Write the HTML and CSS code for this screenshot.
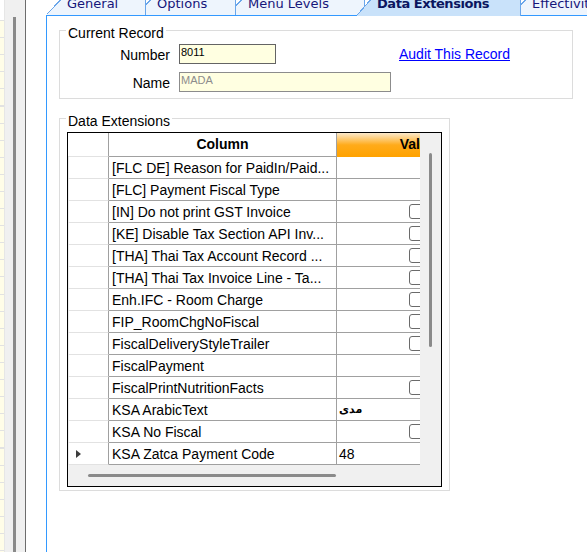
FILE: index.html
```html
<!DOCTYPE html>
<html lang="en">

<head>
  <meta charset="UTF-8">
  <meta name="viewport" content="width=device-width, initial-scale=1.0">
  <title>Tender Media - Data Extensions</title>
  <link rel="stylesheet" href="styles.css">
</head>

<body>
  <div class="app">
    <div class="side">
      <div class="side-cells"><div class="cells"></div></div>
      <div class="side-scroll"><div class="side-thumb"></div></div>
    </div>

    <div class="main">
      <div class="tabs">
        <div class="tab tab-general">General</div>
        <div class="tab tab-options">Options</div>
        <div class="tab tab-menu">Menu Levels</div>
        <div class="tab tab-ext active">Data Extensions</div>
        <div class="tab tab-eff">Effectivity</div>
      </div>

      <div class="panel">
        <div class="group record">
          <div class="group-title">Current Record</div>
          <div class="field">
            <label class="field-label">Number</label>
            <div class="input number">8011</div>
            <a href="#" class="audit">Audit This Record</a>
          </div>
          <div class="field">
            <label class="field-label">Name</label>
            <div class="input name">MADA</div>
          </div>
        </div>

        <div class="group ext">
          <div class="group-title">Data Extensions</div>
          <div class="grid">
            <div class="grid-left">
              <div class="grid-view">
                <div class="head">
                  <div class="rh"></div>
                  <div class="col">Column</div>
                  <div class="val">Value</div>
                </div>
                <div id="rows"></div>
              </div>
              <div class="hscroll"><div class="hthumb"></div></div>
            </div>
            <div class="vscroll"><div class="vthumb"></div></div>
          </div>
        </div>
      </div>
    </div>
  </div>

  <script>
    // value: "check" draws a checkbox, anything else is printed as text
    var extensions = [
      { name: "[FLC DE] Reason for PaidIn/Paid...", value: "" },
      { name: "[FLC] Payment Fiscal Type", value: "" },
      { name: "[IN] Do not print GST Invoice", value: "check" },
      { name: "[KE] Disable Tax Section API Inv...", value: "check" },
      { name: "[THA] Thai Tax Account Record ...", value: "check" },
      { name: "[THA] Thai Tax Invoice Line - Ta...", value: "check" },
      { name: "Enh.IFC - Room Charge", value: "check" },
      { name: "FIP_RoomChgNoFiscal", value: "check" },
      { name: "FiscalDeliveryStyleTrailer", value: "check" },
      { name: "FiscalPayment", value: "" },
      { name: "FiscalPrintNutritionFacts", value: "check" },
      { name: "KSA ArabicText", value: "مدى", arabic: true },
      { name: "KSA No Fiscal", value: "check" },
      { name: "KSA Zatca Payment Code", value: "48", current: true }
    ];

    function render() {
      var rows = document.getElementById("rows");
      extensions.forEach(function (ext) {
        var row = document.createElement("div");
        row.className = "row";

        var rh = document.createElement("div");
        rh.className = "rh";
        if (ext.current) {
          var mark = document.createElement("span");
          mark.className = "current";
          rh.appendChild(mark);
        }

        var col = document.createElement("div");
        col.className = "col";
        col.textContent = ext.name;

        var val = document.createElement("div");
        val.className = "val";
        if (ext.value === "check") {
          var box = document.createElement("span");
          box.className = "check";
          val.appendChild(box);
        } else {
          val.textContent = ext.value;
          if (ext.arabic) val.classList.add("arabic");
        }

        row.appendChild(rh);
        row.appendChild(col);
        row.appendChild(val);
        rows.appendChild(row);
      });
    }

    render();
  </script>
</body>

</html>
```

FILE: styles.css
```css
* {
  box-sizing: border-box;
}

body {
  margin: 0;
  font-family: "Liberation Sans", Arial, sans-serif;
  font-size: 14px;
  color: #000;
  background: #fff;
}

.app {
  display: flex;
  height: 552px;
  overflow: hidden;
}

/* grid + scrollbar of the list on the left */
.side {
  flex: none;
  display: flex;
  width: 26px;
  border-right: 1px solid #6d6d6d;
}
.side-cells {
  display: flex;
  width: 5px;
  padding-top: 20px;
  border-right: 1px solid #e6e6e6;
}
.side-cells .cells {
  flex: 1;
  background: repeating-linear-gradient(#e2e2e2 0 1px, #fffde8 1px 17.1px);
}
.side-scroll {
  display: flex;
  width: 20px;
  padding: 17px 0 0 8px;
  background: #f0f0f0;
}
.side-thumb {
  width: 3px;
  background: #8a8a8a;
}

.main {
  flex: 1;
  min-width: 0;
  display: flex;
  flex-direction: column;
  padding-left: 20px;
  overflow: hidden;
}

/* tab strip */
.tabs {
  flex: none;
  display: flex;
  align-items: flex-start;
  height: 15px;
}
.tab {
  --bg: #eef5fd;
  flex: none;
  height: 15px;
  padding-left: 20px;
  border-right: 1px solid #6aa6ea;
  font-family: "DejaVu Sans", sans-serif;
  font-size: 13px;
  line-height: 7px;
  color: #16167a;
  white-space: nowrap;
  background:
    linear-gradient(to bottom right, transparent calc(50% - 1px), #6aa6ea calc(50% - 1px), #6aa6ea 50%, var(--bg) 50%) 0 0 / 14px 15px no-repeat,
    linear-gradient(var(--bg), var(--bg)) 14px 0 / 100% 100% no-repeat;
}
.tab-general {
  width: 99px;
  margin-left: 1px;
  z-index: 5;
}
.tab-options {
  width: 99px;
  margin-left: -9px;
  z-index: 4;
}
.tab-menu {
  width: 137px;
  margin-left: -8px;
  z-index: 3;
}
.tab-ext {
  width: 164px;
  margin-left: -8px;
}
.tab-eff {
  width: 100px;
  margin-left: -9px;
  z-index: 1;
}
.tab.active {
  --bg: #c9e2fa;
  height: 16px;
  z-index: 10;
  font-weight: bold;
  letter-spacing: -0.45px;
  color: #0b1660;
  background:
    linear-gradient(to bottom right, transparent calc(50% - 1px), #6aa6ea calc(50% - 1px), #6aa6ea 50%, var(--bg) 50%) 0 0 / 14px 16px no-repeat,
    linear-gradient(var(--bg), var(--bg)) 14px 0 / 100% 100% no-repeat;
}

.panel {
  flex: 1;
  border-left: 1px solid #3399ff;
  border-top: 1px solid #3399ff;
  padding: 14px 0 0 12px;
}

/* group boxes */
.group {
  border: 1px solid #dcdcdc;
}
.group-title {
  width: max-content;
  margin: -6px 0 0 6px;
  padding: 0 2px;
  line-height: 16px;
  background: #fff;
}

.record {
  width: 514px;
  height: 69px;
}
.field {
  display: flex;
  align-items: flex-start;
  height: 20px;
  margin-top: 3px;
}
.field + .field {
  margin-top: 8px;
}
.field-label {
  width: 110px;
  height: 20px;
  margin-right: 9px;
  padding-top: 2px;
  line-height: 18px;
  text-align: right;
}
.input {
  height: 20px;
  padding: 1px 1px 0;
  font-size: 11px;
  line-height: 13px;
  background: #ffffe1;
  border: 1px solid #646464;
}
.input.number {
  width: 97px;
}
.input.name {
  width: 212px;
  color: #8d8d8d;
  border-color: #8c8c8c;
}
.audit {
  height: 20px;
  margin-left: 123px;
  padding-top: 1px;
  line-height: 19px;
  color: #0000ff;
}

.ext {
  width: 391px;
  height: 373px;
  margin-top: 19px;
}

/* data extension grid */
.grid {
  display: flex;
  width: 375px;
  height: 355px;
  margin: 3px 0 0 7px;
  border: 1px solid #000;
}
.grid-left {
  width: 352px;
  display: flex;
  flex-direction: column;
}
.grid-view {
  height: 332px;
  overflow: hidden;
}
.head,
.row {
  display: flex;
}
.rh {
  flex: none;
  width: 41px;
  border-right: 1px solid #a0a0a0;
  border-bottom: 1px solid #e2e2e2;
}
.col {
  flex: none;
  width: 228px;
  border-right: 1px solid #a0a0a0;
  border-bottom: 1px solid #a0a0a0;
  white-space: nowrap;
  overflow: hidden;
}
.val {
  flex: none;
  width: 162px;
  border-bottom: 1px solid #a0a0a0;
  white-space: nowrap;
}

.head > div {
  height: 24px;
  line-height: 23px;
  font-weight: bold;
  text-align: center;
}
.head .val {
  border-bottom: none;
  background: linear-gradient(#fbe9cc, #ffab1a 50%, #ffa200);
}

.row > div {
  height: 22px;
  padding-top: 1px;
  line-height: 20px;
}
.row .rh {
  border-left: 1px solid #ececec;
}
.row .col {
  padding-left: 3px;
}
.row .val {
  padding-left: 2px;
}
.row .val.arabic {
  font-family: "DejaVu Sans", sans-serif;
  font-size: 11px;
  font-weight: bold;
}

.current {
  display: block;
  width: 0;
  height: 0;
  margin: 6px 0 0 7px;
  border-left: 5px solid #3c3c3c;
  border-top: 4px solid transparent;
  border-bottom: 4px solid transparent;
}

.check {
  display: block;
  width: 15px;
  height: 15px;
  margin: 2px 0 0 70px;
  border: 1px solid #6a6a6a;
  border-radius: 3px;
  background: #fff;
}

.hscroll {
  flex: 1;
  padding: 9px 0 0 20px;
  background: #f0f0f0;
}
.hthumb {
  width: 248px;
  height: 3px;
  border-radius: 2px;
  background: #8a8a8a;
}
.vscroll {
  flex: 1;
  padding: 20px 0 0 9px;
  background: #f0f0f0;
}
.vthumb {
  width: 3px;
  height: 194px;
  border-radius: 2px;
  background: #8a8a8a;
}
```
